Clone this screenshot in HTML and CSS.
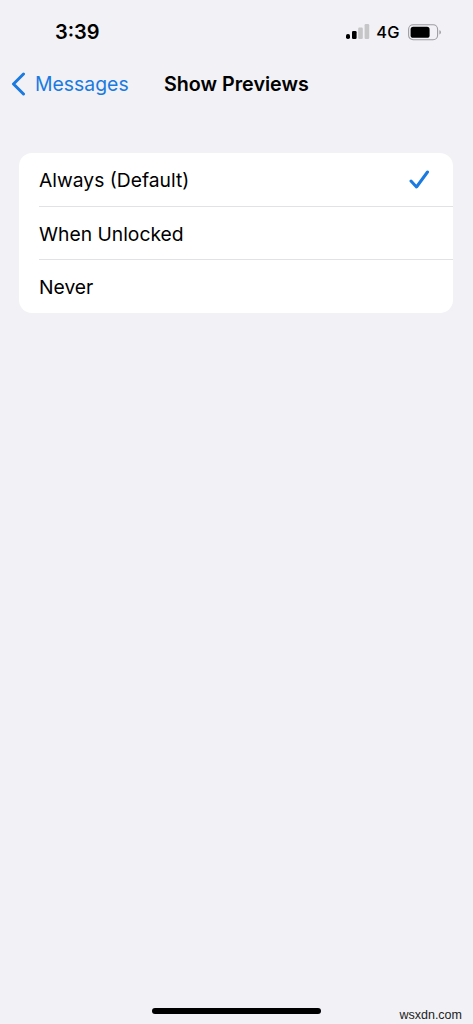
FILE: index.html
```html
<!DOCTYPE html>
<html lang="en">
<head>
    <meta charset="UTF-8">
    <meta name="viewport" content="width=device-width, initial-scale=1.0">
    <title>Show Previews</title>
    <link rel="stylesheet" href="styles.css">
</head>
<body>

<!-- Status bar -->
<div class="status-bar">
    <div class="status-time">3:39</div>
    <div class="status-right">
        <svg class="signal" width="24" height="16" viewBox="0 0 24 16">
            <rect x="0" y="10" width="4" height="5" rx="1.8" fill="#000"/>
            <rect x="6" y="7" width="4.6" height="8" rx="1.2" fill="#000"/>
            <rect x="12.2" y="3.5" width="4.6" height="11.5" rx="1.2" fill="#c6c6c9"/>
            <rect x="18.6" y="0" width="4.6" height="15" rx="1.2" fill="#c6c6c9"/>
        </svg>
        <span class="network">4G</span>
        <svg class="battery" width="34" height="17" viewBox="0 0 34 17">
            <rect x="0.6" y="0.8" width="29" height="15" rx="4.5" fill="none" stroke="#9d9da1" stroke-width="1.1"/>
            <rect x="2.6" y="2.8" width="19" height="11" rx="2.6" fill="#000"/>
            <path d="M31.3 6.2 C32.6 6.6 33 7.4 33 8.3 C33 9.2 32.6 10 31.3 10.4 Z" fill="#a5a5a9"/>
        </svg>
    </div>
</div>

<!-- Nav bar -->
<div class="nav-bar">
    <div class="nav-back">
        <svg class="chevron" width="16" height="24" viewBox="0 0 16 24">
            <path d="M13.5 2 L3.5 12 L13.5 22" fill="none" stroke="#1a7ae0" stroke-width="3" stroke-linecap="round" stroke-linejoin="round"/>
        </svg>
        <span class="nav-back-label">Messages</span>
    </div>
    <div class="nav-title">Show Previews</div>
</div>

<!-- Options -->
<div class="option-list">
    <div class="option-row">
        <span class="option-label">Always (Default)</span>
        <svg class="check" width="21" height="19" viewBox="0 0 21 19">
            <path d="M2 11 L7.5 17 L18.5 2" fill="none" stroke="#1a7ae0" stroke-width="3" stroke-linecap="round" stroke-linejoin="round"/>
        </svg>
    </div>
    <div class="option-row">
        <span class="option-label">When Unlocked</span>
    </div>
    <div class="option-row">
        <span class="option-label">Never</span>
    </div>
</div>

<!-- Home indicator -->
<div class="home-area">
    <div class="home-indicator"></div>
    <span class="watermark">wsxdn.com</span>
</div>

</body>
</html>
```

FILE: styles.css
```css
* {
    box-sizing: border-box;
}

html, body {
    height: 100%;
}

body {
    margin: 0;
    height: 1024px;
    overflow: hidden;
    display: flex;
    flex-direction: column;
    background-color: #f1f1f6;
    font-family: 'Inter', 'Liberation Sans', sans-serif;
    color: #000;
}

.status-bar {
    display: flex;
    justify-content: space-between;
    align-items: center;
    height: 64px;
    padding: 0 31px 0 55px;
}

.status-time {
    font-size: 20px;
    font-weight: 600;
}

.status-right {
    display: flex;
    align-items: center;
    gap: 8px;
}

.signal {
    margin-right: -1.5px;
}

.network {
    font-size: 16.4px;
    font-weight: 500;
    letter-spacing: 0.4px;
}

.nav-bar {
    display: flex;
    align-items: center;
    height: 40px;
    padding-left: 10px;
}

.nav-back {
    display: flex;
    align-items: center;
    gap: 9px;
    width: 154px;
    color: #1a7ae0;
}

.nav-back-label {
    font-size: 19.4px;
}

.nav-title {
    font-size: 19.7px;
    font-weight: 600;
}

.option-list {
    margin: 49px 20px 0 19px;
    background-color: #fff;
    border-radius: 13px;
}

.option-row {
    display: flex;
    justify-content: space-between;
    align-items: center;
    height: 53px;
    margin-left: 20px;
    padding: 2px 23px 0 0;
    border-bottom: 1px solid #e2e2e6;
}

.option-row:first-child {
    height: 54px;
    padding-top: 0;
}

.option-row:last-child {
    padding-top: 0;
    border-bottom: none;
}

.option-label {
    font-size: 19.3px;
}

.home-area {
    margin-top: auto;
    height: 24px;
    position: relative;
}

.home-indicator {
    width: 169px;
    height: 6px;
    margin: 8px 0 0 152px;
    background-color: #000;
    border-radius: 3px;
}

/* sits over the bottom corner */
.watermark {
    position: absolute;
    right: 11px;
    bottom: 2px;
    font-family: 'Liberation Sans', sans-serif;
    font-size: 12.5px;
    color: #222;
}
```
